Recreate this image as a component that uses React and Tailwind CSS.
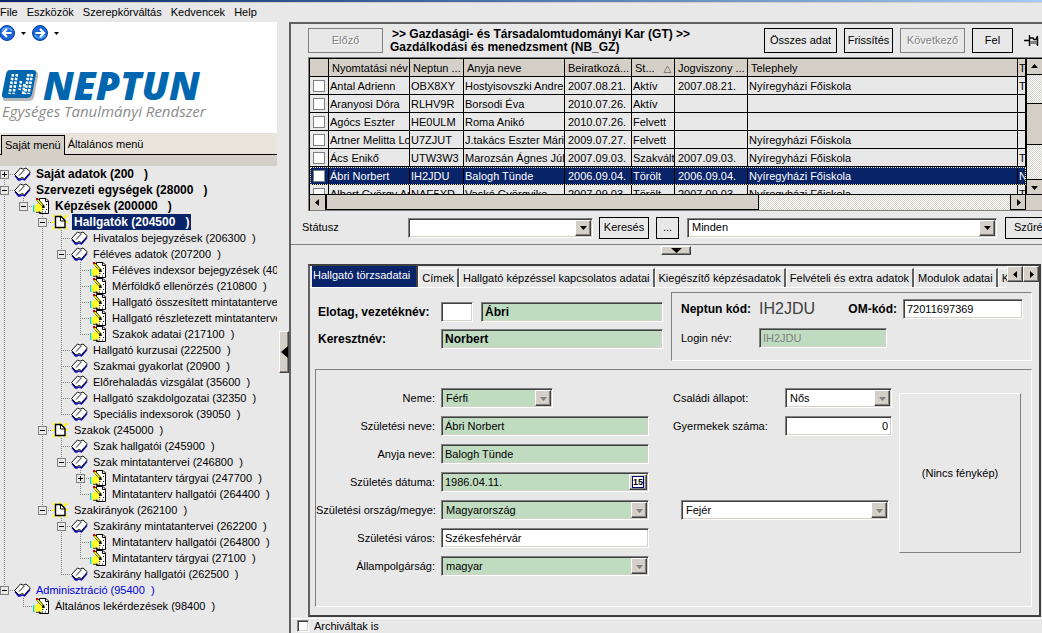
import React, { useState } from 'react';

const sunken =
    'border border-t-[#808080] border-l-[#808080] border-b-white border-r-white shadow-[inset_1px_1px_0_#404040,inset_-1px_-1px_0_#d4d0c8]';
const raised =
    'bg-[#d4d0c8] border border-t-white border-l-white border-b-[#404040] border-r-[#404040] shadow-[inset_-1px_-1px_0_#808080]';
const group = 'border border-t-[#808080] border-l-[#808080] border-b-white border-r-white';

const menu = ['File', 'Eszközök', 'Szerepkörváltás', 'Kedvencek', 'Help'];

const tree = [
    { label: 'Saját adatok (200   )', icon: 'book', bold: true, closed: true },
    {
        label: 'Szervezeti egységek (28000   )',
        icon: 'book',
        bold: true,
        children: [
            {
                label: 'Képzések (200000   )',
                icon: 'form',
                bold: true,
                children: [
                    {
                        label: 'Hallgatók (204500   )',
                        icon: 'page',
                        bold: true,
                        children: [
                            { label: 'Hivatalos bejegyzések (206300  )', icon: 'book' },
                            {
                                label: 'Féléves adatok (207200  )',
                                icon: 'book',
                                children: [
                                    { label: 'Féléves indexsor bejegyzések (405', icon: 'form' },
                                    { label: 'Mérföldkő ellenörzés (210800  )', icon: 'form' },
                                    { label: 'Hallgató összesített mintatanterve (', icon: 'form' },
                                    { label: 'Hallgató részletezett mintatanterve', icon: 'form' },
                                    { label: 'Szakok adatai (217100  )', icon: 'form' },
                                ],
                            },
                            { label: 'Hallgató kurzusai (222500  )', icon: 'book' },
                            { label: 'Szakmai gyakorlat (20900  )', icon: 'book' },
                            { label: 'Előrehaladás vizsgálat (35600  )', icon: 'book' },
                            { label: 'Hallgató szakdolgozatai (32350  )', icon: 'book' },
                            { label: 'Speciális indexsorok (39050  )', icon: 'book' },
                        ],
                    },
                    {
                        label: 'Szakok (245000  )',
                        icon: 'page',
                        children: [
                            { label: 'Szak hallgatói (245900  )', icon: 'book' },
                            {
                                label: 'Szak mintatantervei (246800  )',
                                icon: 'book',
                                children: [
                                    { label: 'Mintatanterv tárgyai (247700  )', icon: 'form', closed: true },
                                    { label: 'Mintatanterv hallgatói (264400  )', icon: 'form' },
                                ],
                            },
                        ],
                    },
                    {
                        label: 'Szakirányok (262100  )',
                        icon: 'page',
                        children: [
                            {
                                label: 'Szakirány mintatantervei (262200  )',
                                icon: 'book',
                                children: [
                                    { label: 'Mintatanterv hallgatói (264800  )', icon: 'form' },
                                    { label: 'Mintatanterv tárgyai (27100  )', icon: 'form' },
                                ],
                            },
                            { label: 'Szakirány hallgatói (262500  )', icon: 'book' },
                        ],
                    },
                ],
            },
        ],
    },
    {
        label: 'Adminisztráció (95400  )',
        icon: 'book',
        blue: true,
        children: [{ label: 'Általános lekérdezések (98400  )', icon: 'form' }],
    },
];

const students = [
    ['Antal Adrienn', 'OBX8XY', 'Hostyisovszki Andrea', '2007.08.21.', 'Aktív', '2007.08.21.', 'Nyíregyházi Főiskola', 'T'],
    ['Aranyosi Dóra', 'RLHV9R', 'Borsodi Éva', '2010.07.26.', 'Aktív', '', '', ''],
    ['Agócs Eszter', 'HE0ULM', 'Roma Anikó', '2010.07.26.', 'Felvett', '', '', ''],
    ['Artner Melitta Lo', 'U7ZJUT', 'J.takács Eszter Mária', '2009.07.27.', 'Felvett', '', 'Nyíregyházi Főiskola', ''],
    ['Ács Enikő', 'UTW3W3', 'Marozsán Ágnes Júli', '2007.09.03.', 'Szakváltó', '2007.09.03.', 'Nyíregyházi Főiskola', 'T'],
    ['Ábri Norbert', 'IH2JDU', 'Balogh Tünde', '2006.09.04.', 'Törölt', '2006.09.04.', 'Nyíregyházi Főiskola', 'N'],
    ['Albert György Ar', 'NAE5XD', 'Vaskó Györgyike', '2007.09.03.', 'Törölt', '2007.09.03.', 'Nyíregyházi Főiskola', 'T'],
];

const tabs = [
    'Hallgató törzsadatai',
    'Címek',
    'Hallgató képzéssel kapcsolatos adatai',
    'Kiegészítő képzésadatok',
    'Felvételi és extra adatok',
    'Modulok adatai',
    'K',
];

const BookIcon = () => (
    <svg width="17" height="16" viewBox="0 0 17 16" className="shrink-0">
        <path d="M1 9.5 L4.5 14 H6 L8 13 L10.5 14 L16 7.5" fill="none" stroke="#0000c8" strokeWidth="1.3" />
        <path d="M.6 8.5 L6.5 2 L9 3.2 L12 2 L16.4 6 L10.5 12.6 L8 11.6 L5 13 Z" fill="#fff" stroke="#000" strokeWidth=".9" />
        <path d="M10.5 3.8 L5 9.6" fill="none" stroke="#000" strokeWidth=".9" />
    </svg>
);

const FormIcon = () => (
    <svg width="17" height="16" viewBox="0 0 17 16" className="shrink-0">
        <path d="M6.5 .5 H13 L15.5 3 V15.5 H6.5 Z" fill="#fff" stroke="#000" />
        <path d="M12.5 .5 V3.5 H15.5" fill="none" stroke="#000" />
        <path d="M13 6.5h1M13 11.5h1M9 14h1M12 14h1" stroke="#000" />
        <path d="M0 7h1.5v7H0z" fill="#00e0e0" />
        <path d="M1.5 7.5 L4 6.5 L6 5 L8 7 H12 V8.5 H10 V11 L8.5 13.5 L3 14 L1.5 13 Z" fill="#ffff30" />
        <path d="M9 9.5H12M9 11.5H10.5M3 14.3H8.5" stroke="#000" strokeWidth=".8" />
        <path d="M4 1 L11 9" stroke="#000" strokeWidth="2.4" />
        <path d="M4 1.2 L9.5 7.5" stroke="#ffff00" strokeWidth="1.4" />
        <path d="M3 0h2v2H3z" fill="#d00000" />
    </svg>
);

const PageIcon = () => (
    <svg width="17" height="16" viewBox="0 0 17 16" className="shrink-0">
        <path d="M1 1 L15 15 M15 1 L1 15 M8 0 V16 M0 8 H16" stroke="#ffff00" strokeWidth="2" />
        <path d="M3.5 2.5 H9 L13 6.5 V13.5 H3.5 Z" fill="#fff" stroke="#000" strokeWidth="1.4" />
        <path d="M8.5 2.5 V7 H13" fill="none" stroke="#000" />
    </svg>
);

const icons = { book: BookIcon, form: FormIcon, page: PageIcon };

const Guide = ({ up, down, right, children }) => (
    <span className="relative flex h-4 w-[19px] shrink-0 items-center justify-center">
        <svg width="19" height="16" className="absolute inset-0" shapeRendering="crispEdges">
            <g stroke="#808080" strokeDasharray="1 1">
                {up && <path d="M9.5 0V8" />}
                {down && <path d="M9.5 8V16" />}
                {right && <path d="M9 8.5H19" />}
            </g>
        </svg>
        {children}
    </span>
);

const TreeNode = ({ node, guides, first, last, selected, onSelect }) => {
    const [open, setOpen] = useState(!node.closed);
    const Icon = icons[node.icon];
    const active = selected === node.label;
    return (
        <li>
            <div className="flex h-4 items-center">
                {guides.map((g, i) => (
                    <Guide key={i} up={g} down={g} />
                ))}
                <Guide up={!first} down={!last} right>
                    {(node.children || node.closed) && (
                        <button
                            aria-label={open ? 'Bezár' : 'Kinyit'}
                            onClick={() => setOpen(!open)}
                            className="relative size-[9px] border border-[#808080] bg-[#e8e8e8]"
                        >
                            <svg width="7" height="7" shapeRendering="crispEdges">
                                <path d={open ? 'M1 3.5H6' : 'M1 3.5H6M3.5 1V6'} stroke="#000" />
                            </svg>
                        </button>
                    )}
                </Guide>
                <Icon />
                <button
                    onClick={() => onSelect(node.label)}
                    className={`ml-[3px] h-4 whitespace-pre px-[2px] ${node.bold ? 'text-[12px] font-bold' : ''} ${
                        active ? 'bg-[#0a246a] text-white' : node.blue ? 'text-[#0000e0]' : ''
                    }`}
                >
                    {node.label}
                </button>
            </div>
            {node.children && open && (
                <ul>
                    {node.children.map((child, i) => (
                        <TreeNode
                            key={child.label}
                            node={child}
                            guides={[...guides, !last]}
                            last={i === node.children.length - 1}
                            selected={selected}
                            onSelect={onSelect}
                        />
                    ))}
                </ul>
            )}
        </li>
    );
};

const Arrow = ({ dir = 'down', color = '#000' }) => {
    const paths = {
        down: 'M0 2H7L3.5 6Z',
        up: 'M0 5H7L3.5 1Z',
        left: 'M5 0V7L1 3.5Z',
        right: 'M2 0V7L6 3.5Z',
    };
    return (
        <svg width="7" height="7" viewBox="0 0 7 7" className="shrink-0">
            <path d={paths[dir]} fill={color} />
        </svg>
    );
};

const NavButton = ({ back }) => (
    <button aria-label={back ? 'Vissza' : 'Előre'} className="shrink-0">
        <svg width="16" height="16" viewBox="0 0 16 16" className={back ? '' : 'rotate-180'}>
            <circle cx="8" cy="8" r="7.5" fill="#1a66d8" stroke="#0b3fa0" />
            <path d="M3 6 A5.5 5 0 0 1 13 6" fill="none" stroke="#5aa8ff" strokeWidth="1.5" />
            <path d="M8 4 L4 8 L8 12 M4 8 H12.5" fill="none" stroke="#fff" strokeWidth="2.2" />
        </svg>
    </button>
);

const Logo = () => (
    <div className="pl-[2px]">
        <div className="flex h-[34px] items-center gap-1">
            <svg width="37" height="31" viewBox="0 0 37 31">
                <path d="M8 2 H34 Q37 2 36 6 L32 27 Q31 31 27 31 H3 Q0 30 1 27 Z" fill="#b8b8b8" />
                <path d="M8 0 H31 Q35 0 34 4 L30 24 Q29 28 25 28 H3 Q-1 28 0 24 L4 4 Q5 0 8 0 Z" fill="#0066b0" />
                <g stroke="#fff" strokeWidth="2.6" strokeDasharray="2.6 1.2">
                    <path d="M11 4 L7.500 24M15 4 L11.500 24M19 11 L17.500 20M22.500 14 L21 24M26.500 4 L23 24M30 4 L26.500 24" />
                </g>
            </svg>
            <span className="font-['Open_Sans',sans-serif] text-[39px] font-extrabold italic leading-[32px] text-[#0066b0]">
                NEPTUN
            </span>
        </div>
        <p className="font-['Open_Sans',sans-serif] text-[15px] italic leading-[18px] text-[#8c8c8c]">
            Egységes Tanulmányi Rendszer
        </p>
    </div>
);

const Button = ({ children, className = '', disabled }) => (
    <button
        disabled={disabled}
        className={`flex shrink-0 items-center justify-center whitespace-nowrap border ${
            disabled ? 'border-[#808080] text-[#808080] [text-shadow:1px_1px_0_#fff]' : 'border-black'
        } ${className}`}
    >
        {children}
    </button>
);

const TextBox = ({ id, value, className = '', ...rest }) => (
    <input
        id={id}
        type="text"
        defaultValue={value}
        className={`h-5 shrink-0 px-[3px] outline-none ${sunken} ${className}`}
        {...rest}
    />
);

const Select = ({ id, value, className = '', arrow = '#000', label }) => (
    <span className={`flex h-5 p-px ${sunken} ${className}`}>
        <select id={id} aria-label={label} className="min-w-0 flex-1 appearance-none px-[3px] outline-none">
            <option>{value}</option>
        </select>
        <span className={`flex w-4 shrink-0 items-center justify-center ${raised}`}>
            <Arrow color={arrow} />
        </span>
    </span>
);

const Row = ({ id, label, children }) => (
    <div className="flex h-5 items-center gap-[6px]">
        <label htmlFor={id} className="w-[119px] shrink-0 whitespace-nowrap text-right">
            {label}
        </label>
        {children}
    </div>
);

const Sidebar = () => {
    const [selected, setSelected] = useState('Hallgatók (204500   )');
    return (
        <aside className="flex w-[277px] shrink-0 flex-col overflow-hidden">
            <div className="h-[111px] shrink-0 bg-white">
                <div className="flex h-[22px] items-center gap-[6px]">
                    <div className="-ml-px flex items-center gap-[6px]">
                        <NavButton back />
                        <svg width="5" height="3"><path d="M0 0H5L2.5 3Z" /></svg>
                    </div>
                    <div className="flex items-center gap-[6px]">
                        <NavButton />
                        <svg width="5" height="3"><path d="M0 0H5L2.5 3Z" /></svg>
                    </div>
                </div>
                <div className="pt-6">
                    <Logo />
                </div>
            </div>
            <div className="flex h-[22px] shrink-0 items-end bg-[#e8e4dc]">
                <span className="h-full w-px border-b border-black" />
                <button className="h-5 border border-b-0 border-black bg-[#d4d0c8] px-[3px]">Saját menü</button>
                <button className="h-5 flex-1 border-b border-black px-[3px] text-left">Általános menü</button>
            </div>
            <div className="h-[11px] shrink-0 bg-[#d4d0c8]" />
            <ul className="-ml-[5px]">
                {tree.map((node, i) => (
                    <TreeNode
                        key={node.label}
                        node={node}
                        guides={[]}
                        first={i === 0}
                        last={i === tree.length - 1}
                        selected={selected}
                        onSelect={setSelected}
                    />
                ))}
            </ul>
        </aside>
    );
};

const track = 'bg-[repeating-conic-gradient(#fff_0_25%,#d4d0c8_0_50%)] bg-[length:2px_2px]';

const StudentTable = () => {
    const [row, setRow] = useState(5);
    const cell = 'h-[18px] overflow-hidden whitespace-nowrap border-b border-r border-black p-0';
    return (
        <div className="ml-[17px] border-l border-t border-[#808080]">
            <div className="flex h-[137px] border-l border-t border-black">
                <div className="min-w-0 flex-1 overflow-hidden border-b border-black">
                    <table className="w-full table-fixed border-separate border-spacing-0">
                        <colgroup>
                            <col className="w-[19px]" />
                            <col className="w-[81px]" />
                            <col className="w-[54px]" />
                            <col className="w-[101px]" />
                            <col className="w-[67px]" />
                            <col className="w-[43px]" />
                            <col className="w-[73px]" />
                            <col />
                            <col className="w-[8px]" />
                        </colgroup>
                        <thead className="bg-[#d4d0c8] text-left">
                            <tr>
                                <th className={cell} />
                                {['Nyomtatási név', 'Neptun ...', 'Anyja neve', 'Beiratkozá...', 'St...', 'Jogviszony ...', 'Telephely', 'T'].map((h) => (
                                    <th key={h} className={`${cell} font-normal leading-4 ${h === 'T' ? 'pl-px' : 'pl-[3px]'}`}>
                                        {h}
                                        {h === 'St...' && (
                                            <svg width="9" height="8" className="ml-2 inline">
                                                <path d="M4.5 1 L8 7.5 H1 Z" fill="none" stroke="#808080" />
                                            </svg>
                                        )}
                                    </th>
                                ))}
                            </tr>
                        </thead>
                        <tbody>
                            {students.map((s, i) => (
                                <tr
                                    key={s[1]}
                                    onClick={() => setRow(i)}
                                    className={i === row ? 'bg-[#0a246a] text-white outline-1 -outline-offset-1 outline-dotted outline-[#e8e4b0]' : ''}
                                >
                                    <td className={cell}>
                                        <input
                                            type="checkbox"
                                            aria-label={s[0]}
                                            className="ml-[3px] block size-3 appearance-none border border-[#808080] bg-white"
                                        />
                                    </td>
                                    {s.map((v, j) => (
                                        <td key={j} className={`${cell} leading-4 ${j === 3 || j === 5 ? 'pl-[3px]' : 'pl-px'}`}>
                                            {v}
                                        </td>
                                    ))}
                                </tr>
                            ))}
                        </tbody>
                    </table>
                </div>
                <div className={`flex w-4 shrink-0 flex-col border-l border-black ${track}`}>
                    <span className="flex h-4 items-center justify-center border-b border-black bg-[#d4d0c8]"><Arrow dir="up" /></span>
                    <span className="mt-7 h-[42px] border-y border-black bg-[#d4d0c8]" />
                    <span className="mt-auto flex h-4 items-center justify-center border-y border-black bg-[#d4d0c8]"><Arrow /></span>
                </div>
            </div>
            <div className="flex h-4 border-b border-l border-[#808080] border-l-black bg-[#d4d0c8]">
                <span className="flex w-4 items-center justify-center border-r border-black"><Arrow dir="left" /></span>
                <span className="w-[433px] border-x border-b border-black bg-[#d4d0c8]" />
                <span className={`flex-1 ${track}`} />
                <span className="mr-4 flex w-4 items-center justify-center border border-t-0 border-black bg-[#d4d0c8]"><Arrow dir="right" /></span>
            </div>
        </div>
    );
};

const Details = () => {
    const [tab, setTab] = useState(0);
    return (
        <section className="ml-[17px] mr-px mt-[9px] flex flex-1 flex-col border-2 border-[#404040] border-l-[#606060]">
            <div className="flex h-[22px]">
                <div role="tablist" className="flex min-w-0 flex-1 items-end overflow-hidden border-b border-white">
                    {tabs.map((t, i) => (
                        <button
                            key={t}
                            role="tab"
                            aria-selected={i === tab}
                            onClick={() => setTab(i)}
                            className={
                                i === tab
                                    ? 'ml-[2px] h-[21px] shrink-0 border-r-2 border-[#404040] bg-[#0a246a] pb-[3px] pl-px pr-[6px] text-white'
                                    : 'h-[19px] shrink-0 border-l border-r-2 border-t border-l-white border-r-[#606060] border-t-white px-[3px]'
                            }
                        >
                            {t}
                        </button>
                    ))}
                </div>
                <button aria-label="Balra" className={`flex size-4 items-center justify-center ${raised}`}><Arrow dir="left" /></button>
                <button aria-label="Jobbra" className={`flex size-4 items-center justify-center ${raised}`}><Arrow dir="right" /></button>
            </div>
            <div className="flex flex-1 flex-col pb-2 pl-[5px] pr-[7px] pt-1">
                <div className="flex gap-2">
                    <div className="flex flex-col gap-[7px] pl-[3px] pt-[10px] text-[12px] font-bold">
                        <div className="flex items-center">
                            <label htmlFor="vezeteknev" className="w-[123px]">Elotag, vezetéknév:</label>
                            <TextBox id="elotag" aria-label="Elotag" className="mr-2 w-8 bg-white" />
                            <TextBox id="vezeteknev" value="Ábri" className="w-[182px] bg-[#c0dcc0]" />
                        </div>
                        <div className="flex items-center">
                            <label htmlFor="keresztnev" className="w-[123px]">Keresztnév:</label>
                            <TextBox id="keresztnev" value="Norbert" className="w-[222px] bg-[#c0dcc0]" />
                        </div>
                    </div>
                    <div className={`flex h-[69px] flex-1 flex-col gap-[9px] py-[6px] pl-[9px] pr-2 ${group}`}>
                        <div className="flex items-center">
                            <span className="w-[78px] text-[12px] font-bold">Neptun kód:</span>
                            <span className="text-[16px] leading-5 text-[#404040]">IH2JDU</span>
                            <label htmlFor="om" className="ml-auto mr-[6px] text-[12px] font-bold">OM-kód:</label>
                            <TextBox id="om" value="72011697369" className="w-[120px] bg-white" />
                        </div>
                        <div className="flex items-center">
                            <label htmlFor="login" className="w-[78px]">Login név:</label>
                            <TextBox id="login" value="IH2JDU" disabled className="w-32 bg-[#c0dcc0] text-[#808080]" />
                        </div>
                    </div>
                </div>
                <div className={`mt-2 flex flex-1 items-start pt-[18px] ${group}`}>
                    <div className="flex flex-col gap-2">
                        <Row id="neme" label="Neme:">
                            <Select id="neme" value="Férfi" arrow="#808080" className="w-28 bg-[#c0dcc0]" />
                        </Row>
                        <Row id="szulnev" label="Születési neve:">
                            <TextBox id="szulnev" value="Ábri Norbert" className="w-52 bg-[#c0dcc0]" />
                        </Row>
                        <Row id="anyja" label="Anyja neve:">
                            <TextBox id="anyja" value="Balogh Tünde" className="w-52 bg-[#c0dcc0]" />
                        </Row>
                        <Row id="datum" label="Születés dátuma:">
                            <span className={`flex h-5 w-52 bg-[#c0dcc0] p-px ${sunken}`}>
                                <input id="datum" defaultValue="1986.04.11." className="min-w-0 flex-1 px-[2px] outline-none" />
                                <button className={`flex w-[18px] items-center justify-center ${raised}`}>
                                    <span className="border border-[#000080] bg-white text-[9px] font-bold leading-[10px]">15</span>
                                </button>
                            </span>
                        </Row>
                        <Row id="orszag" label="Születési ország/megye:">
                            <Select id="orszag" value="Magyarország" arrow="#808080" className="w-52 bg-[#c0dcc0]" />
                        </Row>
                        <Row id="varos" label="Születési város:">
                            <TextBox id="varos" value="Székesfehérvár" className="w-52 bg-white" />
                        </Row>
                        <Row id="allampolg" label="Állampolgárság:">
                            <Select id="allampolg" value="magyar" arrow="#808080" className="w-52 bg-[#c0dcc0]" />
                        </Row>
                    </div>
                    <div className="ml-6 flex flex-col gap-2">
                        <div className="flex h-5 items-center">
                            <label htmlFor="csaladi" className="w-28">Családi állapot:</label>
                            <Select id="csaladi" value="Nős" arrow="#808080" className="w-[107px] bg-white" />
                        </div>
                        <div className="flex h-5 items-center">
                            <label htmlFor="gyermek" className="w-28">Gyermekek száma:</label>
                            <TextBox id="gyermek" value="0" className="w-[107px] bg-white text-right" />
                        </div>
                        <Select label="Megye" value="Fejér" arrow="#808080" className="ml-2 mt-14 w-52 bg-white" />
                    </div>
                    <div className="ml-auto mr-[10px] mt-[5px] flex h-40 w-[122px] shrink-0 items-center justify-center border border-b-[#808080] border-l-white border-r-[#808080] border-t-white">
                        (Nincs fénykép)
                    </div>
                </div>
            </div>
        </section>
    );
};

const App = () => (
    <div className="flex h-screen flex-col overflow-hidden bg-[#e8e8e8] font-['Liberation_Sans',Arial,sans-serif] text-[11px] leading-[13px] text-black">
        <div className="h-[3px] shrink-0 border-b border-[#d4d0c8] bg-linear-to-r from-[#0a246a] to-[#a6caf0]" />
        <nav className="flex h-[19px] shrink-0 items-center gap-[9px]">
            {menu.map((m) => (
                <button key={m}>{m}</button>
            ))}
        </nav>
        <div className="flex min-h-0 flex-1">
            <Sidebar />
            <div className="flex w-3 shrink-0 items-center justify-end pt-12">
                <button aria-label="Panel elrejtése" className={`flex h-[42px] w-[10px] items-center justify-center ${raised}`}>
                    <svg width="7" height="12" className="shrink-0"><path d="M7 0V12L0 6Z" /></svg>
                </button>
            </div>
            <main className="flex min-w-0 flex-1 flex-col border-l-2 border-t-2 border-[#606060]">
                <header className="flex h-[33px] shrink-0 items-center gap-[7px] pl-[17px] pr-[3px]">
                    <Button disabled className="h-[25px] w-[75px]">Előző</Button>
                    <h1 className="min-w-0 flex-1 text-[12px] font-bold leading-[13px]">
                        <span className="pl-[2px]">&gt;&gt; Gazdasági- és Társadalomtudományi Kar (GT) &gt;&gt;</span>
                        <br />
                        Gazdálkodási és menedzsment (NB_GZ)
                    </h1>
                    <Button className="h-[25px] w-[73px]">Összes adat</Button>
                    <Button className="h-[25px] w-[49px]">Frissítés</Button>
                    <Button disabled className="h-[25px] w-[65px]">Következő</Button>
                    <Button className="h-[25px] w-[41px]">Fel</Button>
                    <svg width="15" height="11" viewBox="0 0 15 11" className="ml-1 shrink-0">
                        <path d="M0 5.5H5M5.5 0V11M6 3H9L10 4.5H12L13.5 1V10L12 7.5H6" fill="none" stroke="#000" strokeWidth="1.4" />
                        <path d="M6 6H13V9H6Z" fill="#808080" />
                    </svg>
                </header>
                <StudentTable />
                <div className="flex h-[34px] shrink-0 items-center border-b border-[#808080] pl-[11px]">
                    <label htmlFor="statusz" className="w-[106px] shrink-0">Státusz</label>
                    <Select id="statusz" value="" className="mr-[6px] w-[185px] shrink-0 bg-white" />
                    <Button className="mr-[7px] h-[22px] w-[50px]">Keresés</Button>
                    <Button className="mr-2 h-[22px] w-[23px]">...</Button>
                    <Select label="Szűrő" value="Minden" className="min-w-0 flex-1 bg-white" />
                    <button className="ml-2 h-[22px] w-[37px] overflow-hidden whitespace-nowrap border border-r-0 border-black pl-2 text-left">
                        Szűrés
                    </button>
                </div>
                <button aria-label="Lenyit" className={`ml-[370px] mt-px flex h-[9px] w-[30px] shrink-0 items-center justify-center ${raised}`}>
                    <svg width="11" height="5"><path d="M0 0H11L5.5 5Z" /></svg>
                </button>
                <Details />
                <label className="mt-px flex h-[15px] shrink-0 items-center gap-[5px] border-t border-white pl-[6px]">
                    <input type="checkbox" className={`size-3 appearance-none bg-white ${sunken}`} />
                    Archiváltak is
                </label>
            </main>
        </div>
    </div>
);

export default App;
